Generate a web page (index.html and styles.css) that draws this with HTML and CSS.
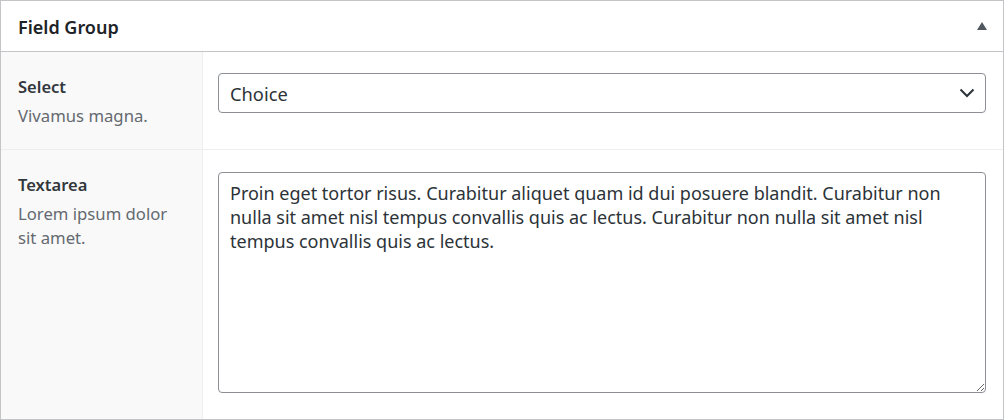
FILE: index.html
```html
<!DOCTYPE html>
<html>
<head>
<meta charset="utf-8">
<link rel="stylesheet" href="styles.css">
</head>
<body>
<div class="postbox">
  <div class="postbox-header">
    <h2 class="title">Field Group</h2>
    <span class="toggle" aria-hidden="true"></span>
  </div>
  <div class="field">
    <div class="label">
      <div class="label-name">Select</div>
      <div class="label-desc">Vivamus magna.</div>
    </div>
    <div class="input">
      <div class="select">
        <span>Choice</span>
        <svg class="chev" width="16" height="10" viewBox="0 0 16 10"><path d="M1.5 1.5 L8 8 L14.5 1.5" fill="none" stroke="#2c3338" stroke-width="2"/></svg>
      </div>
    </div>
  </div>
  <div class="field field-last">
    <div class="label">
      <div class="label-name">Textarea</div>
      <div class="label-desc">Lorem ipsum dolor sit amet.</div>
    </div>
    <div class="input input-ta">
      <textarea class="textarea">Proin eget tortor risus. Curabitur aliquet quam id dui posuere blandit. Curabitur non nulla sit amet nisl tempus convallis quis ac lectus. Curabitur non nulla sit amet nisl tempus convallis quis ac lectus.</textarea>
    </div>
  </div>
</div>
</body>
</html>
```
FILE: styles.css
```css
html, body {
  margin: 0;
  padding: 0;
  background: #ffffff;
}
body {
  font-family: "Noto Sans", "Open Sans", sans-serif;
  font-size: 16px;
  color: #2c3338;
}
.postbox {
  width: 1004px;
  height: 420px;
  box-sizing: border-box;
  border: 1px solid #c3c4c7;
  display: flex;
  flex-direction: column;
}
.postbox-header {
  height: 50px;
  flex: none;
  border-bottom: 1px solid #c3c4c7;
  display: flex;
  align-items: center;
  justify-content: space-between;
  padding: 0 16px 0 17px;
}
.title {
  margin: 0;
  font-size: 18px;
  font-weight: 600;
  color: #1d2327;
  line-height: 24px;
  position: relative;
  top: 1px;
}
.toggle {
  width: 0;
  height: 0;
  border-left: 5px solid transparent;
  border-right: 5px solid transparent;
  border-bottom: 8px solid #50575e;
  margin-top: -1px;
}
.field {
  display: flex;
  border-bottom: 1px solid #eeeeee;
  height: 97px;
  flex: none;
}
.field-last {
  flex: 1;
  border-bottom: none;
}
.label {
  width: 202px;
  flex: none;
  background: #f9f9f9;
  border-right: 1px solid #eeeeee;
  padding: 23px 17px 0 17px;
  box-sizing: border-box;
}
.label-name {
  font-size: 16.5px;
  font-weight: 600;
  color: #32373c;
  line-height: 24px;
}
.label-desc {
  font-size: 16.7px;
  color: #646970;
  line-height: 24px;
  margin-top: 5px;
}
.input {
  flex: 1;
  padding: 21px 17px 0 15px;
}
.input-ta {
  padding-top: 22px;
}
.select {
  height: 40px;
  box-sizing: border-box;
  border: 1px solid #8c8f94;
  border-radius: 4px;
  display: flex;
  align-items: center;
  justify-content: space-between;
  padding: 0 10px 0 11px;
  color: #2c3338;
  font-size: 18.3px;
}
.chev {
  display: block;
}
.textarea {
  display: block;
  width: 100%;
  height: 221px;
  box-sizing: border-box;
  border: 1px solid #8c8f94;
  border-radius: 4px;
  padding: 8px 11px;
  font-family: "Noto Sans", "Open Sans", sans-serif;
  font-size: 18px;
  line-height: 24px;
  color: #2c3338;
  margin: 0;
  resize: vertical;
}
```
